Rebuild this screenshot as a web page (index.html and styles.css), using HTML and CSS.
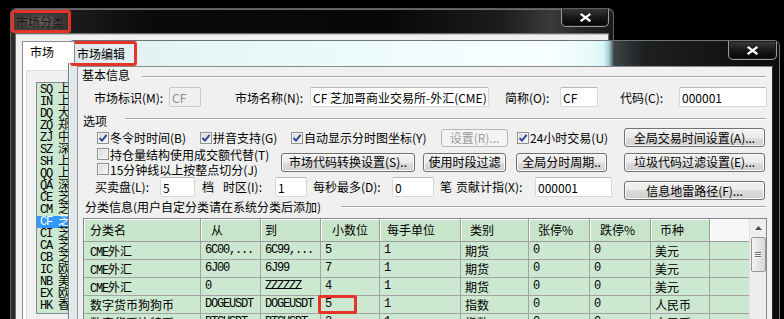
FILE: index.html
```html
<!DOCTYPE html>
<html lang="zh-CN">
<head>
    <meta charset="UTF-8">
    <meta name="viewport" content="width=device-width, initial-scale=1.0">
    <title>市场编辑</title>
    <link rel="stylesheet" href="styles.css">
</head>
<body>
<div class="desk">

    <!-- 市场分类 (ventana de fondo) -->
    <div class="win win-outer">
        <div class="titlebar">
            <span class="title">市场分类</span>
            <span class="close">
                <svg width="11" height="9" viewBox="0 0 11 9"><path d="M1.5 1.5 L9.5 7.5 M9.5 1.5 L1.5 7.5" stroke="#151515" stroke-width="3.8" stroke-linecap="square"/><path d="M1.5 1.5 L9.5 7.5 M9.5 1.5 L1.5 7.5" stroke="#fff" stroke-width="2.2" stroke-linecap="square"/></svg>
            </span>
        </div>
        <div class="client">
            <div class="tabs"><span class="tab">市场</span></div>
            <div class="tabpage">
                <div class="panel">
                    <div class="mlist">
                        <div class="mi">SQ 上海期货</div>
                        <div class="mi">IN 上海能源</div>
                        <div class="mi">DQ 大连商品</div>
                        <div class="mi">ZQ 郑州商品</div>
                        <div class="mi">ZJ 中金所</div>
                        <div class="mi">SZ 深圳证券</div>
                        <div class="mi">SH 上海证券</div>
                        <div class="mi">QQ 上海黄金</div>
                        <div class="mi">QA 深圳期权</div>
                        <div class="mi">CE 芝加哥</div>
                        <div class="mi">CM 芝加哥</div>
                        <div class="mi sel">CF 芝加哥</div>
                        <div class="mi">CI 芝加哥</div>
                        <div class="mi">CA 芝加哥</div>
                        <div class="mi">CB 芝加哥</div>
                        <div class="mi">IC 欧洲</div>
                        <div class="mi">NB 美国</div>
                        <div class="mi">EX 欧洲</div>
                        <div class="mi">HK 香港</div>
                    </div>
                </div>
            </div>
        </div>
    </div>

    <!-- 市场编辑 (dialogo) -->
    <div class="win win-inner">
        <div class="titlebar">
            <span class="title">市场编辑</span>
            <span class="close">
                <svg width="11" height="9" viewBox="0 0 11 9"><path d="M1.5 1.5 L9.5 7.5 M9.5 1.5 L1.5 7.5" stroke="#151515" stroke-width="3.8" stroke-linecap="square"/><path d="M1.5 1.5 L9.5 7.5 M9.5 1.5 L1.5 7.5" stroke="#fff" stroke-width="2.2" stroke-linecap="square"/></svg>
            </span>
        </div>

        <div class="client">
            <div class="sect s1"><span class="cap">基本信息</span><span class="rule"></span></div>

            <div class="row r1">
                <span class="lb lb-id">市场标识(M):</span>
                <input class="ed ed-id" value="CF" disabled>
                <span class="lb lb-name">市场名称(N):</span>
                <input class="ed ed-name" value="CF 芝加哥商业交易所-外汇(CME)">
                <span class="lb lb-abbr">简称(O):</span>
                <input class="ed ed-abbr" value="CF">
                <span class="lb lb-code">代码(C):</span>
                <input class="ed ed-code" value="000001">
            </div>

            <div class="sect s2"><span class="cap">选项</span><span class="rule"></span></div>

            <div class="row ra">
                <span class="ck ck1"><i class="box"><svg width="10" height="10" viewBox="0 0 10 10"><path d="M1.5 5 L4 7.6 L8.6 1.8" fill="none" stroke="#2a4598" stroke-width="1.9"/></svg></i>冬令时时间(B)</span>
                <span class="ck ck2"><i class="box"><svg width="10" height="10" viewBox="0 0 10 10"><path d="M1.5 5 L4 7.6 L8.6 1.8" fill="none" stroke="#2a4598" stroke-width="1.9"/></svg></i>拼音支持(G)</span>
                <span class="ck ck3"><i class="box"><svg width="10" height="10" viewBox="0 0 10 10"><path d="M1.5 5 L4 7.6 L8.6 1.8" fill="none" stroke="#2a4598" stroke-width="1.9"/></svg></i>自动显示分时图坐标(Y)</span>
                <button class="btn btn-set" disabled>设置(R)...</button>
                <span class="ck ck4"><i class="box"><svg width="10" height="10" viewBox="0 0 10 10"><path d="M1.5 5 L4 7.6 L8.6 1.8" fill="none" stroke="#2a4598" stroke-width="1.9"/></svg></i>24小时交易(U)</span>
                <button class="btn btn-wide">全局交易时间设置(A)...</button>
            </div>

            <div class="row rb">
                <div class="ckcol">
                    <span class="ck"><i class="box"></i>持仓量结构使用成交额代替(T)</span>
                    <span class="ck"><i class="box"></i>15分钟线以上按整点切分(J)</span>
                </div>
                <button class="btn btn-conv">市场代码转换设置(S)..</button>
                <button class="btn btn-filt">使用时段过滤</button>
                <button class="btn btn-cyc">全局分时周期..</button>
                <button class="btn btn-wide btn-junk">垃圾代码过滤设置(E)...</button>
            </div>

            <div class="row rd">
                <span class="lb lb-bs">买卖盘(L):</span>
                <input class="ed ed-bs" value="5">
                <span class="lb lb-dang">档</span>
                <span class="lb lb-tz">时区(I):</span>
                <input class="ed ed-tz" value="1">
                <span class="lb lb-max">每秒最多(D):</span>
                <input class="ed ed-max" value="0">
                <span class="lb lb-bi">笔</span>
                <span class="lb lb-gx">贡献计指(X):</span>
                <input class="ed ed-gx" value="000001">
                <button class="btn btn-wide btn-mine">信息地雷路径(F)...</button>
            </div>

            <div class="sect s3"><span class="cap">分类信息(用户自定分类请在系统分类后添加)</span><span class="rule"></span></div>

            <div class="grid">
                <div class="tbl">
                    <div class="tr th">
                        <span class="c1">分类名</span><span class="c2">从</span><span class="c3">到</span><span class="c4">小数位</span><span class="c5">每手单位</span><span class="c6">类别</span><span class="c7">张停%</span><span class="c8">跌停%</span><span class="c9">币种</span><span class="c0"></span>
                    </div>
                    <div class="tr">
                        <span><b class="m">CME</b>外汇</span><span class="m">6C00,...</span><span class="m">6C99,...</span><span class="m">5</span><span class="m">1</span><span>期货</span><span class="m">0</span><span class="m">0</span><span>美元</span><span></span>
                    </div>
                    <div class="tr">
                        <span><b class="m">CME</b>外汇</span><span class="m">6J00</span><span class="m">6J99</span><span class="m">7</span><span class="m">1</span><span>期货</span><span class="m">0</span><span class="m">0</span><span>美元</span><span></span>
                    </div>
                    <div class="tr">
                        <span><b class="m">CME</b>外汇</span><span class="m">0</span><span class="m">ZZZZZZ</span><span class="m">4</span><span class="m">1</span><span>期货</span><span class="m">0</span><span class="m">0</span><span>美元</span><span></span>
                    </div>
                    <div class="tr">
                        <span>数字货币狗狗币</span><span class="m">DOGEUSDT</span><span class="m">DOGEUSDT</span><span class="m hl">5<i class="mark"></i></span><span class="m">1</span><span>指数</span><span class="m">0</span><span class="m">0</span><span>人民币</span><span></span>
                    </div>
                    <div class="tr">
                        <span>数字货币比特币</span><span class="m">BTCUSDT</span><span class="m">BTCUSDT</span><span class="m">2</span><span class="m">1</span><span>指数</span><span class="m">0</span><span class="m">0</span><span>人民币</span><span></span>
                    </div>
                </div>
                <div class="vscroll">
                    <span class="sb-up"><svg width="7" height="4" viewBox="0 0 7 4"><path d="M0 4 L3.5 0 L7 4Z" fill="#4a4a4a"/></svg></span>
                    <span class="sb-thumb"><i></i><i></i><i></i></span>
                </div>
            </div>
        </div>
    </div>

</div>
</body>
</html>
```

FILE: styles.css
```css
* {
    box-sizing: border-box;
}

body {
    margin: 0;
    background: #000;
    font: 12px "Noto Sans CJK SC", sans-serif;
    color: #000;
}

.desk {
    position: relative;
    width: 784px;
    height: 319px;
    overflow: hidden;
}

/* ventanas */
.win {
    position: absolute;
    border: 1px solid #5e5e5e;
    border-radius: 6px 6px 0 0;
    overflow: hidden;
}

.titlebar {
    display: flex;
    height: 24px;
}

.title {
    height: 23px;
    border: 3px solid #e5332a;
    border-radius: 3px;
    line-height: 17px;
    white-space: nowrap;
}

.close {
    margin-left: auto;
    width: 48px;
    height: 19px;
    display: flex;
    align-items: center;
    justify-content: center;
    border: 1px solid #9c9c9c;
    border-top: none;
    border-radius: 0 0 5px 5px;
    background: linear-gradient(#3c3c3c, #161616 55%, #050505);
    box-shadow: inset 0 0 0 1px #1c1c1c;
}

/* ventana de fondo */
.win-outer {
    left: 10px;
    top: 8px;
    width: 604px;
    height: 330px;
    background: linear-gradient(90deg, #2c2b2a 0, #1c1c1c 60px, #0a0a0a 140px, #070809 380px, #1c1c1c 490px, #3a3a3a 540px, #262626 570px, #1a1a1a 100%);
    box-shadow: inset 0 1px 0 #6a6a6a;
}

.win-outer .title {
    margin-top: 1px;
    padding: 0 4px 0 2px;
    color: #1c1c1c;
    background: radial-gradient(closest-side, rgba(110, 105, 98, 0.9), rgba(80, 76, 72, 0.5));
}

.win-outer .close {
    margin-top: -1px;
    margin-right: 4px;
}

.win-outer .client {
    margin: 0 4px;
    height: 300px;
    border: 1px solid #6e6e6e;
    background: #f0f0f0;
    box-shadow: inset 0 1px 0 #c4c4c4;
    padding: 7px 0 0 6px;
}

.tabs {
    display: flex;
}

.tab {
    height: 22px;
    padding: 0 20px 0 7px;
    border: 1px solid #898c95;
    border-bottom: none;
    background: #fff;
    line-height: 20px;
    position: relative;
    z-index: 1;
}

.tabpage {
    margin-top: -1px;
    height: 260px;
    border: 1px solid #898c95;
    background: #fff;
    padding: 7px 0 0 3px;
}

.panel {
    height: 250px;
    border: 1px solid #d5dfe5;
    background: #f0f0f0;
    padding: 11px 0 0 9px;
}

.mlist {
    width: 80px;
    height: 232px;
    border: 1px solid #828790;
    background: #cde8d0;
    padding-top: 1px;
}

.mi {
    height: 12px;
    line-height: 12px;
    padding-left: 3px;
    font-family: "Liberation Mono", "Noto Sans CJK SC", monospace;
    letter-spacing: -1.2px;
    white-space: nowrap;
}

.mi.sel {
    background: #3399ff;
    color: #fff;
}

/* dialogo */
.win-inner {
    left: 68px;
    top: 40px;
    width: 712px;
    height: 290px;
    border-color: #6c7476;
    background: linear-gradient(90deg, #dfe7e9 0, #e4f2f3 70px, #eefbfb 300px, #f7ffff 480px, #e6f9fa 526px, #d2f3f9 535px, #a5ccd2 540px, #3e4446 545px, #1e1f20 575px, #0c0c0c 100%);
    box-shadow: inset 1px 0 0 #effcff;
}

.win-inner .titlebar {
    height: 25px;
}

.win-inner .title {
    height: 25px;
    width: 67px;
    margin-left: 1px;
    padding-left: 4px;
    line-height: 19px;
}

.win-inner .close {
    width: 49px;
    margin-right: 2px;
}

.win-inner .client {
    margin-left: 8px;
    width: 696px;
    height: 270px;
    border-top: 1px solid #8a8a8a;
    border-left: 1px solid #9a9a9a;
    border-right: 1px solid #2a2a2a;
    background: #f0f0f0;
    padding-right: 6px;
}

.sect {
    display: flex;
    height: 14px;
    line-height: 14px;
}

.rule {
    flex: 1;
    height: 2px;
    border-top: 1px solid #a6a6a6;
    border-bottom: 1px solid #fff;
}

.s1 { margin-top: 1px; }
.s1 .cap { margin-left: 4px; }
.s1 .rule { margin: 8px 0 0 12px; }

.s2 { margin-top: 7px; }
.s2 .cap { margin-left: 5px; }
.s2 .rule { margin: 4px 0 0 18px; }

.s3 { margin-top: 0; }
.s3 .cap { margin-left: 7px; white-space: nowrap; }
.s3 .rule { margin: 6px 0 0 20px; }

.row {
    display: flex;
    align-items: center;
}

.row > * {
    flex-shrink: 0;
}

.lb {
    white-space: nowrap;
}

.ed {
    font: inherit;
    height: 20px;
    padding: 0 2px;
    border: 1px solid #d3d7dc;
    border-top-color: #b4b8bd;
    border-radius: 2px;
    background: #fff;
    color: #000;
    outline: none;
}

.ed:disabled {
    background: #f0f0f0;
    color: #8e8e8e;
    border-color: #c9c9c9;
}

/* fila basica */
.r1 { margin-top: 5px; height: 20px; }
.lb-id { margin-left: 16px; width: 75px; }
.ed-id { width: 32px; }
.lb-name { margin-left: 34px; width: 75px; }
.ed-name { width: 179px; }
.lb-abbr { margin-left: 16px; width: 55px; }
.ed-abbr { width: 38px; }
.lb-code { margin-left: 22px; width: 59px; }
.ed-code { width: 88px; }

/* casillas */
.ck {
    display: flex;
    align-items: center;
    height: 14px;
    white-space: nowrap;
}

.ck .box {
    width: 12px;
    height: 12px;
    margin-right: 1px;
    flex-shrink: 0;
    display: flex;
    align-items: center;
    justify-content: center;
    border: 1px solid #8e8f8f;
    background: linear-gradient(135deg, #d8d8d8, #f8f8f8);
    box-shadow: inset 0 0 0 1px #f2f2f2;
}

.btn {
    font: inherit;
    height: 19px;
    padding: 0;
    border: 1px solid #707070;
    border-radius: 3px;
    background: linear-gradient(#f2f2f2 0, #ebebeb 50%, #dddddd 50%, #cfcfcf 100%);
    box-shadow: inset 0 0 0 1px #fbfbfb;
    color: #000;
    line-height: 16px;
    white-space: nowrap;
}

.btn:disabled {
    border-color: #b3b7ba;
    background: #f4f4f4;
    box-shadow: none;
    color: #9a9a9a;
}

.btn-wide { width: 141px; }

.ra { height: 19px; }
.ck1 { margin-left: 19px; width: 103px; }
.ck2 { width: 91px; }
.ck3 { width: 150px; }
.btn-set { width: 67px; height: 18px; }
.ck4 { margin-left: 9px; width: 107px; }

.rb { height: 30px; }

.ckcol {
    margin-left: 19px;
    width: 184px;
    height: 30px;
    display: flex;
    flex-direction: column;
    justify-content: space-between;
    padding: 0 0 1px;
}

.btn-conv { width: 134px; }
.btn-filt { margin-left: 8px; width: 83px; }
.btn-cyc { margin-left: 10px; width: 91px; }
.btn-junk { margin-left: 17px; }

.rd {
    height: 23px;
    align-items: flex-start;
}

.rd .lb { line-height: 20px; }
.lb-bs { margin-left: 17px; width: 65px; }
.ed-bs { width: 35px; }
.lb-dang { margin-left: 7px; width: 21px; }
.lb-tz { width: 52px; }
.ed-tz { width: 32px; }
.lb-max { margin-left: 6px; width: 79px; }
.ed-max { width: 42px; }
.lb-bi { margin-left: 6px; width: 16px; }
.lb-gx { width: 79px; }
.ed-gx { width: 77px; }
.btn-mine { margin-left: 12px; align-self: flex-end; }

/* tabla */
.grid {
    display: flex;
    margin: 4px 0 0 5px;
    width: 684px;
    height: 120px;
    border: 1px solid #828790;
    background: #cde8d0;
}

.tbl {
    width: 665px;
}

.tr {
    display: grid;
    grid-template-columns: 117px 60px 60px 59px 81px 68px 61px 61px 59px 39px;
    height: 18px;
}

.tr > span {
    height: 18px;
    padding-left: 4px;
    border-right: 1px solid #a3a3a3;
    border-bottom: 1px solid #a3a3a3;
    line-height: 17px;
    white-space: nowrap;
    overflow: hidden;
}

.tr > span:first-child {
    padding-left: 6px;
}

.tr > span:last-child {
    border-right: none;
}

.m {
    font-family: "Liberation Mono", monospace;
    font-weight: normal;
    letter-spacing: -1.2px;
}

.tr.th {
    height: 23px;
}

.tr.th > span {
    height: 23px;
    line-height: 22px;
    background: #c8e5cb;
    border-right-color: #9c9c9c;
    border-bottom-color: #9c9c9c;
    box-shadow: inset 1px 1px 0 #fff;
}

.tr.th > .c0 { background: #f6f7f6; }

.th .c1 { padding-left: 13px; }
.th .c2 { padding-left: 10px; }
.th .c3 { padding-left: 4px; }
.th .c4 { padding-left: 11px; }
.th .c5 { padding-left: 7px; }
.th .c6 { padding-left: 9px; }
.th .c7 { padding-left: 9px; }
.th .c8 { padding-left: 10px; }
.th .c9 { padding-left: 9px; }

.tr > span.hl {
    position: relative;
    overflow: visible;
}

.mark {
    position: absolute;
    left: -3px;
    top: -1px;
    width: 39px;
    height: 19px;
    border: 3px solid #e5332a;
    border-radius: 2px;
}

.vscroll {
    width: 17px;
    background: #eeeeee;
    border-left: 1px solid #e2e2e2;
    display: flex;
    flex-direction: column;
    align-items: center;
}

.sb-up {
    width: 16px;
    height: 17px;
    display: flex;
    align-items: center;
    justify-content: center;
}

.sb-thumb {
    margin-top: 1px;
    width: 15px;
    height: 35px;
    border: 1px solid #979797;
    border-radius: 2px;
    background: linear-gradient(90deg, #f3f3f3, #e4e4e4 50%, #d9d9d9);
    display: flex;
    flex-direction: column;
    align-items: center;
    justify-content: center;
    gap: 1px;
}

.sb-thumb i {
    width: 6px;
    height: 1px;
    background: #6a6a6a;
    box-shadow: 0 1px 0 #fff;
}
```
